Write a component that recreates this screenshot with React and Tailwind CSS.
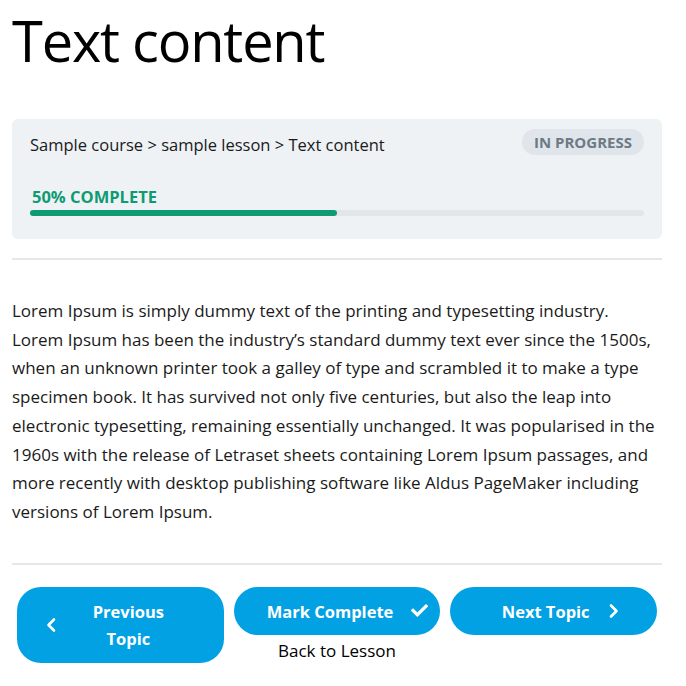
import { FaCheck } from "react-icons/fa";

const Chevron = ({ dir = "right" }) => (
  <svg
    width="12"
    height="16"
    viewBox="0 0 12 16"
    fill="none"
    stroke="currentColor"
    strokeWidth="2.6"
    strokeLinecap="round"
    strokeLinejoin="round"
  >
    {dir === "right" ? <path d="M3 2.5 L8.5 8 L3 13.5" /> : <path d="M9 2.5 L3.5 8 L9 13.5" />}
  </svg>
);

const App = () => {
  return (
    <div className="min-h-screen bg-white text-[#1a1a1a] font-['Open_Sans',sans-serif]">
      <div className="ml-3 w-[650px]">
        {/* Titulo */}
        <h1 className="pt-[2px] text-[56px] leading-[76px] text-black tracking-[-1.2px]">Text content</h1>

        {/* Progreso */}
        <div className="mt-[41px] bg-[#eef2f5] rounded-md px-[18px] pt-[10px] pb-[23px]">
          <div className="flex items-start justify-between">
            <div className="pt-[4px] text-[16.5px] leading-[23px]">
              Sample course &gt; sample lesson &gt; Text content
            </div>
            <span className="px-3 h-[26px] flex items-center rounded-full bg-[#dfe5ea] text-[#6c7a86] text-[15px] font-bold">
              IN PROGRESS
            </span>
          </div>
          <div className="mt-[30px] text-[16.5px] font-bold text-[#0e9b74] leading-[22px] pl-[2px]">
            50% COMPLETE
          </div>
          <div className="mt-[2px] h-[6px] rounded-full bg-[#e2e6ea]">
            <div className="h-full w-1/2 rounded-full bg-[#0e9b74]" />
          </div>
        </div>

        <hr className="mt-[19px] border-t-2 border-[#e6e7e9]" />

        {/* Contenido */}
        <p className="mt-[37px] text-[17px] leading-[28.7px]">
          Lorem Ipsum is simply dummy text of the printing and typesetting industry. Lorem Ipsum has
          been the industry’s standard dummy text ever since the 1500s, when an unknown printer took
          a galley of type and scrambled it to make a type specimen book. It has survived not only
          five centuries, but also the leap into electronic typesetting, remaining essentially
          unchanged. It was popularised in the 1960s with the release of Letraset sheets containing
          Lorem Ipsum passages, and more recently with desktop publishing software like Aldus
          PageMaker including versions of Lorem Ipsum.
        </p>

        <hr className="mt-[36px] border-t-2 border-[#e6e7e9]" />

        {/* Navegacion */}
        <div className="mt-[22px] mx-[5px] grid grid-cols-3 gap-[10px] items-start">
          <button className="flex items-center bg-[#02a1e4] text-white font-bold text-[16.5px] leading-[27px] rounded-[24px] h-[76px] pl-[28px] pr-[40px] gap-[16px]">
            <Chevron dir="left" />
            <span className="flex-1 text-center">
              Previous
              <br />
              Topic
            </span>
          </button>
          <div className="flex flex-col items-center">
            <button className="w-full flex items-center justify-center gap-[18px] bg-[#02a1e4] text-white font-bold text-[16.5px] h-[48px] rounded-full pl-[32px] pr-[11px] pt-[3px]">
              Mark Complete
              <FaCheck className="text-[17px] -mt-[3px]" />
            </button>
            <a className="mt-[4px] text-[17px] leading-[24px] text-black">Back to Lesson</a>
          </div>
          <button className="flex items-center justify-center gap-[18px] bg-[#02a1e4] text-white font-bold text-[16.5px] h-[48px] rounded-full pl-[26px] pr-[12px] pt-[3px]">
            Next Topic
            <span className="-mt-[3px] flex">
              <Chevron />
            </span>
          </button>
        </div>
      </div>
    </div>
  );
};

export default App;
